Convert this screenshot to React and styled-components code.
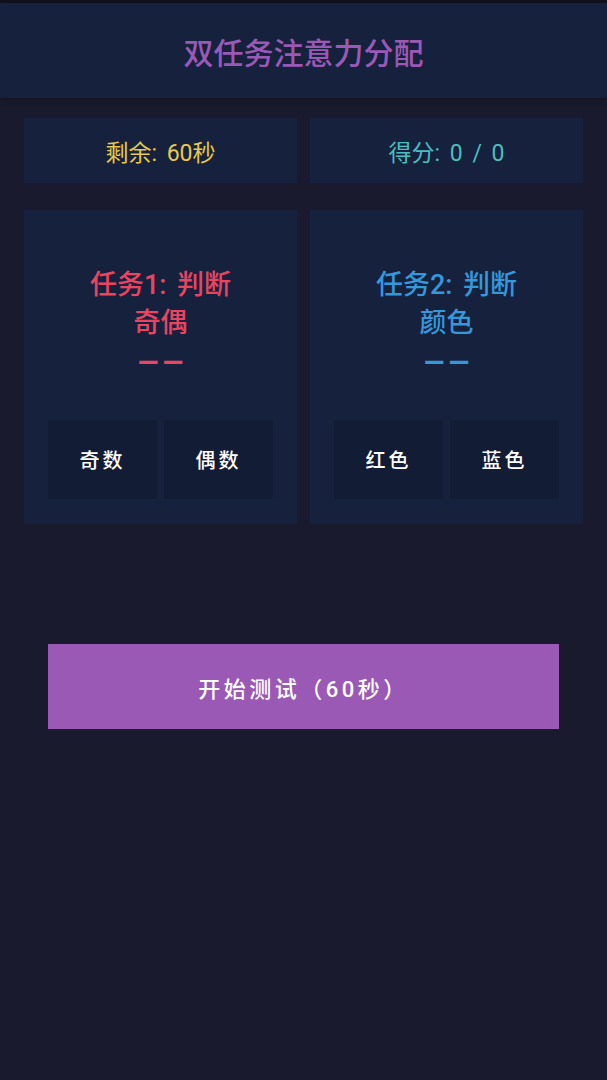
import React from "react";
import styled, { createGlobalStyle } from "styled-components";

const GlobalStyle = createGlobalStyle`
  html, body {
    margin: 0;
    padding: 0;
    background: #1a1a2e;
  }
  body {
    font-family: Roboto, "Noto Sans CJK SC", sans-serif;
    min-height: 1080px;
  }
`;

const Page = styled.div`
  min-height: 1080px;
  background: #1a1a2e;
  border-top: 3px solid #12121f;
`;

const Header = styled.header`
  height: 95px;
  display: flex;
  align-items: center;
  justify-content: center;
  background: #16213e;
  box-shadow: 0 2px 6px rgba(0, 0, 0, 0.3);
`;

const Title = styled.h1`
  margin: 0;
  font-size: 30px;
  font-weight: 500;
  color: #9b59b6;
`;

const Body = styled.main`
  padding: 20px 24px 0;
`;

const Row = styled.div`
  display: grid;
  grid-template-columns: 1fr 1fr;
  gap: 13px;
`;

const StatBox = styled.div`
  height: 65px;
  display: flex;
  align-items: center;
  justify-content: center;
  background: #16213e;
  color: ${(p) => p.$color};
  font-size: 23px;
  word-spacing: 4px;
`;

const Cards = styled(Row)`
  margin-top: 27px;
`;

const TaskCard = styled.section`
  background: #16213e;
  padding: 56px 20px 25px;
  display: flex;
  flex-direction: column;
  align-items: center;
  text-align: center;
`;

const TaskTitle = styled.h2`
  margin: 0;
  font-size: 27px;
  line-height: 38px;
  font-weight: 500;
  word-spacing: 4px;
  color: ${(p) => p.$color};
`;

const Stimulus = styled.div`
  display: inline-block;
  font-size: 30px;
  line-height: 38px;
  font-weight: 700;
  letter-spacing: -0.5px;
  transform: scaleX(2.2);
  color: ${(p) => p.$color};
`;

const Choices = styled.div`
  align-self: stretch;
  margin: 40px 4px 0;
  display: grid;
  grid-template-columns: 1fr 1fr;
  gap: 7px;
`;

const Choice = styled.button`
  height: 79px;
  border: none;
  background: #131c35;
  color: #ffffff;
  font-family: inherit;
  font-size: 20px;
  font-weight: 500;
  letter-spacing: 3px;
  cursor: pointer;
`;

const StartButton = styled.button`
  display: block;
  width: calc(100% - 48px);
  margin: 120px auto 0;
  height: 85px;
  border: none;
  background: #9b59b6;
  color: #ffffff;
  font-family: inherit;
  font-size: 22px;
  font-weight: 500;
  letter-spacing: 3.5px;
  cursor: pointer;
`;

const tasks = [
  { color: "#e94560", title: ["任务1: 判断", "奇偶"], choices: ["奇数", "偶数"] },
  { color: "#3498db", title: ["任务2: 判断", "颜色"], choices: ["红色", "蓝色"] },
];

export default function App() {
  return (
    <Page>
      <GlobalStyle />
      <Header>
        <Title>双任务注意力分配</Title>
      </Header>
      <Body>
        <Row>
          <StatBox $color="#e8c84a">剩余: 60秒</StatBox>
          <StatBox $color="#4bbfbf">得分: 0 / 0</StatBox>
        </Row>
        <Cards>
          {tasks.map((t) => (
            <TaskCard key={t.title[0]}>
              <TaskTitle $color={t.color}>
                {t.title[0]}
                <br />
                {t.title[1]}
              </TaskTitle>
              <Stimulus $color={t.color}>--</Stimulus>
              <Choices>
                {t.choices.map((c) => (
                  <Choice key={c}>{c}</Choice>
                ))}
              </Choices>
            </TaskCard>
          ))}
        </Cards>
        <StartButton>开始测试（60秒）</StartButton>
      </Body>
    </Page>
  );
}
